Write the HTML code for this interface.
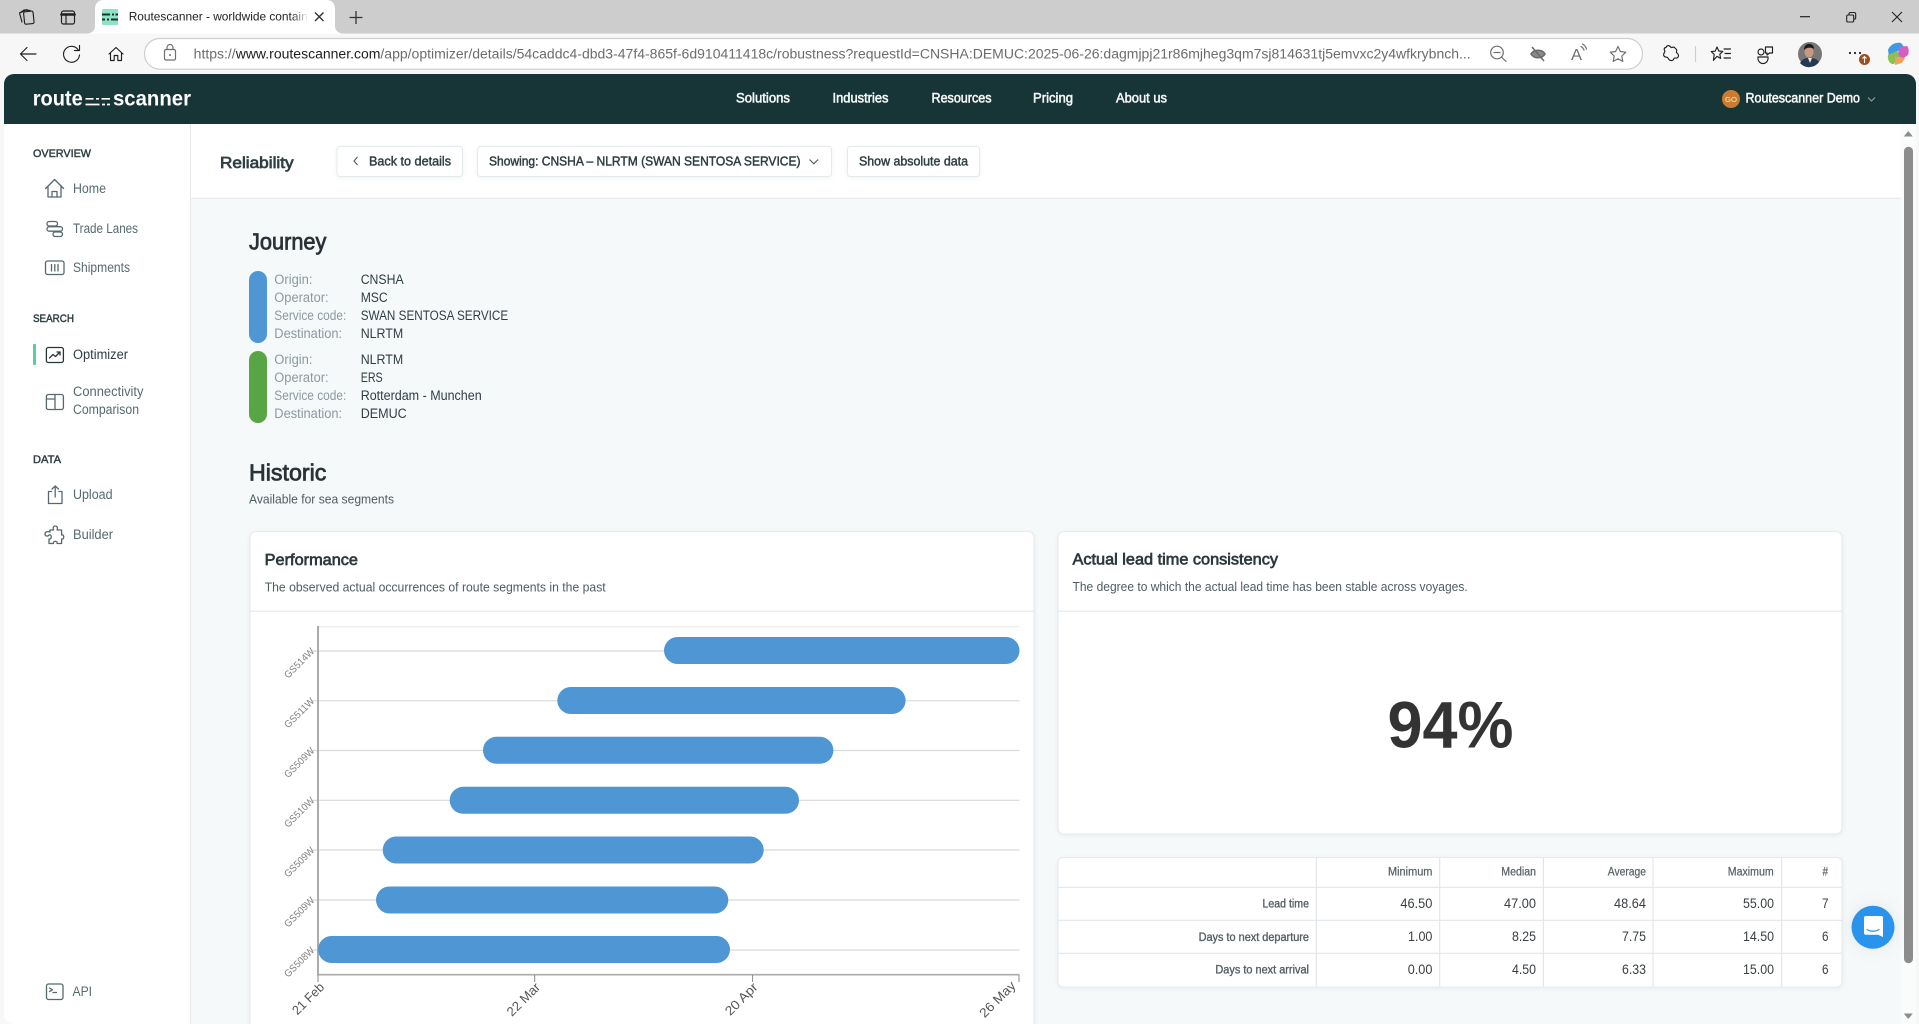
<!DOCTYPE html>
<html lang="en">
<head>
<meta charset="utf-8">
<title>Routescanner - Reliability</title>
<style>
html,body{margin:0;padding:0;width:1919px;height:1024px;overflow:hidden;background:#f7f7f7}
svg{display:block}
text{font-family:"Liberation Sans",Arial,sans-serif;white-space:pre}
.nav{font-size:13.5px;fill:#f4f7f7;stroke:#f4f7f7;stroke-width:.55}
.grp{font-size:11px;fill:#2f3f43;stroke:#2f3f43;stroke-width:.45}
.side{font-size:13.5px;fill:#566a6e}
.btn{font-size:13px;fill:#2f3e42;stroke:#2f3e42;stroke-width:.45}
.lab{font-size:13.5px;fill:#8a9a9f}
.val{font-size:13.5px;fill:#2f3e42}
.h1{font-size:23px;fill:#2a3236;stroke:#2a3236;stroke-width:.75}
.ct{font-size:15.500px;fill:#2c383c;stroke:#2c383c;stroke-width:.65}
.cs{font-size:13px;fill:#4f5d61}
.yl{font-size:10px;fill:#808080}
.xl{font-size:13px;fill:#555}
.th{font-size:11.500px;fill:#5a6468;stroke:#5a6468;stroke-width:.25}
.rl{font-size:11.500px;fill:#555f63;stroke:#555f63;stroke-width:.35}
.td{font-size:14px;fill:#3a3f42}
.ci{fill:none;stroke:#202020;stroke-width:1.15;stroke-linecap:round;stroke-linejoin:round}
.ag{fill:none;stroke:#6f6f6f;stroke-width:1.2;stroke-linecap:round;stroke-linejoin:round}
.si{fill:none;stroke:#566a6e;stroke-width:1.3;stroke-linecap:round;stroke-linejoin:round}
.box{fill:#fff;stroke:#e6eaec;stroke-width:1;filter:drop-shadow(0 1px 2px rgba(40,60,70,.07))}
.ln{stroke:#e4e7ea;stroke-width:1.2}
.gr{stroke:#d8dadb;stroke-width:1.2}
</style>
</head>
<body>
<svg width="1919" height="1024" viewBox="0 0 1919 1024" xmlns="http://www.w3.org/2000/svg">
<defs>
<linearGradient id="fade" x1="0" x2="1" y1="0" y2="0"><stop offset="0" stop-color="#fff" stop-opacity="0"/><stop offset="1" stop-color="#fff"/></linearGradient>
</defs>

<!-- browser chrome -->
<rect width="1919" height="33.5" fill="#cdcdcd"/>
<rect y="33.5" width="1919" height="40.5" fill="#f7f7f7"/>
<path d="M87 33.5C92 33.5 95 30 95 26V9C95 3.5 98 0 104 0H326C332 0 335 3.5 335 9V26C335 30 338 33.5 343 33.5Z" fill="#fff"/>
<!-- workspaces icon -->
<g class="ci"><rect x="24" y="11.5" width="9.5" height="12.5" rx="1.5" transform="rotate(-6 28 17)"/><path d="M23.5 10.5l-4 2.5 2.5 9M27 9.5l-6 3"/><path d="M24 10l6 .5"/></g>
<!-- tab actions -->
<g class="ci"><rect x="61.5" y="11" width="13" height="13" rx="2"/><path d="M61.5 14.5h13" stroke-width="2.6"/><path d="M66 14.5V24"/></g>
<!-- favicon -->
<rect x="102" y="9" width="16" height="16" rx="1" fill="#8fe3c4"/>
<path d="M102 14.5h8M112 14.5h2M115.5 14.5h2.5M102 19.5h3M107 19.5h2M111 19.5h7" stroke="#173436" stroke-width="2"/>
<text x="128.7" y="20.7" font-size="12" fill="#222" textLength="179" lengthAdjust="spacingAndGlyphs">Routescanner - worldwide contain</text>
<rect x="292" y="6" width="16" height="22" fill="url(#fade)"/>
<path d="M315 12.5l8.5 8.5M323.500 12.5L315 21" stroke="#333" stroke-width="1.4" fill="none"/>
<path d="M356 11v13M349.500 17.500h13" stroke="#333" stroke-width="1.3"/>
<!-- window controls -->
<path d="M1800 16.700h10" stroke="#222" stroke-width="1.2"/>
<g fill="none" stroke="#222" stroke-width="1.1"><rect x="1846.700" y="15" width="7" height="7" rx="1.2"/><path d="M1849 15v-1c0-1 .7-1.500 1.500-1.500h3.500c1 0 1.700.7 1.700 1.700v3.500c0 .8-.5 1.500-1.500 1.500"/></g>
<path d="M1892 12l10 10M1902 12l-10 10" stroke="#222" stroke-width="1.1"/>
<!-- nav -->
<path d="M36 54H20.500M27 47.500L20.500 54l6.500 6.500" class="ci"/>
<path d="M78.300 50a8 8 0 1 0 1.200 5M79.500 45.500V50.500H74.500" class="ci"/>
<path d="M109 54l7-6.500 7 6.500M110.500 53v7.500h3.700v-5h3.600v5h3.700V53" class="ci"/>
<rect x="144.500" y="38.500" width="1498" height="30.700" rx="15.300" fill="#fff" stroke="#cfcfcf" stroke-width="1.200"/>
<g class="ag"><rect x="164.500" y="49.500" width="11" height="10.500" rx="1.500"/><path d="M167 49.500v-2a3 3 0 0 1 6 0v2"/></g><circle cx="170" cy="55" r="1" fill="#6f6f6f"/>
<text x="193.700" y="58.500" font-size="13.500" fill="#6c6c6c" textLength="1277" lengthAdjust="spacingAndGlyphs">https://<tspan fill="#1e1e1e">www.routescanner.com</tspan>/app/optimizer/details/54caddc4-dbd3-47f4-865f-6d910411418c/robustness?requestId=CNSHA:DEMUC:2025-06-26:dagmjpj21r86mjheg3qm7sj814631tj5emvxc2y4wfkrybnch...</text>
<g class="ag"><circle cx="1497" cy="52.500" r="6.300"/><path d="M1501.500 57l4.500 4.500M1494 52.500h6"/></g>
<g fill="none" stroke="#6a6a6a" stroke-width="1.600"><path d="M1531 54c3-5 11-5 14 0c-3 5-11 5-14 0z" fill="#8a8a8a"/><path d="M1532 47l12 14" stroke-width="1.500"/></g>
<text x="1571" y="60" font-size="16" fill="#6f6f6f" textLength="11" lengthAdjust="spacingAndGlyphs">A</text>
<path d="M1581 46.500c1.500.8 2.500 2 3 3.500M1582.500 44c2 1 3.500 3 4 5" class="ag"/>
<path d="M1618 46.500l2.400 5 5.400.7-4 3.800 1 5.400-4.800-2.600-4.800 2.600 1-5.400-4-3.800 5.400-.7z" class="ag"/>
<path d="M1666 47.500c.5-1.500 2-2.500 3.500-1.500c1.500 1 1 1.500 2 1.500s2-1 3 0l2 2c1 1-.5 2 0 3s2 1 2 3-1.500 3-3 2.500c-1.500-.5-1.500.5-2 1.500s-2.500 1.500-4 .5-1-2-2-2.500-2.500 0-3.500-1.500 0-3 .7-4-.7-1.500-.5-3 1.800-1.500 1.800-1.500z" class="ci"/>
<path d="M1695.500 46v16" stroke="#cfcfcf" stroke-width="1.200"/>
<path d="M1717 47l1.800 4 4 .4-3 2.800.8 4.200-3.600-2-3.600 4 .8-6-3-2.800 4-.4zM1724 49h6.500M1725 53.500h5.500M1724 58h6.500" class="ci"/>
<path d="M1758 57h10c.5 4-2 6.500-5 6.500s-5.500-2.500-5-6.500z" class="ci"/><circle cx="1761" cy="52" r="3" class="ci"/><path d="M1765.500 47h7v6h-3l-2.500 2v-2h-1.500z" class="ci"/>
<circle cx="1810" cy="54" r="12" fill="#777"/><path d="M1800 63c3-5 6-5 10-5s7 1 9 4a12 12 0 0 1-19 1z" fill="#253a52"/><path d="M1808 58l2 5 2-5z" fill="#e8e8e8"/><ellipse cx="1809" cy="52" rx="4.500" ry="5.500" fill="#c79a80"/><path d="M1804 50c0-5 3-6 5-6s5 1 5 5c-3-2-7-2-10 1z" fill="#1f1a18"/>
<g fill="#222"><circle cx="1850" cy="53" r="1.100"/><circle cx="1855" cy="53" r="1.100"/><circle cx="1860" cy="53" r="1.100"/></g>
<circle cx="1864.500" cy="59.500" r="5.500" fill="#a04d20"/><path d="M1864.500 63v-6M1862.500 58.500l2-2 2 2" stroke="#fff" stroke-width="1.100" fill="none"/>
<g><path d="M1888 50c2-5 7-8 13-7l4 5-7 3-5 5-4 1z" fill="#3d9be3"/><path d="M1888 55l9-4 3 5-6 8c-3 1-7-3-6-9z" fill="#8cc152"/><path d="M1900 47l7-1c2 2 2 6 1 9l-7 5-3-7z" fill="#d45fc0"/><path d="M1895 57l5 0 5 1-3 5-7 2z" fill="#eba35e"/></g>

<!-- page bg -->
<rect x="4" y="124" width="1912" height="900" fill="#f6f9fa"/>
<path d="M4 124H190.500V1024H14a10 10 0 0 1-10-10z" fill="#fff"/>
<path d="M190.500 124V1024" stroke="#e7eaec" stroke-width="1.200"/>
<rect x="191" y="124" width="1710" height="74" fill="#fff"/>
<path d="M191 198.300H1901" stroke="#e7eaec" stroke-width="1.200"/>
<!-- scrollbar -->
<rect x="1901" y="124" width="15" height="900" fill="#fafbfb"/>
<rect x="1904" y="146.700" width="9" height="816.500" rx="4.500" fill="#8c8c8c"/>
<path d="M1908.300 131l4.500 5.500h-9z" fill="#8c8c8c"/>
<path d="M1903.800 1013.500h9l-4.500 5.500z" fill="#8c8c8c"/>

<!-- header -->
<path d="M4 124V84a10 10 0 0 1 10-10H1906a10 10 0 0 1 10 10V124z" fill="#173436"/>
<text x="32.700" y="105.700" font-size="21" font-weight="700" fill="#fff" textLength="50" lengthAdjust="spacingAndGlyphs">route</text>
<path d="M85.500 98.800h8M96 98.800h3M101.500 98.800h8.500M85.500 104.500h14M102 104.500h3M107 104.500h3" stroke="#fff" stroke-width="1.700"/>
<text x="113" y="105.700" font-size="21" font-weight="700" fill="#fff" textLength="78" lengthAdjust="spacingAndGlyphs">scanner</text>
<text class="nav" x="736" y="102.700" textLength="54" lengthAdjust="spacingAndGlyphs">Solutions</text>
<text class="nav" x="832.500" y="102.700" textLength="56" lengthAdjust="spacingAndGlyphs">Industries</text>
<text class="nav" x="931.500" y="102.700" textLength="60" lengthAdjust="spacingAndGlyphs">Resources</text>
<text class="nav" x="1033" y="102.700" textLength="40" lengthAdjust="spacingAndGlyphs">Pricing</text>
<text class="nav" x="1116" y="102.700" textLength="51" lengthAdjust="spacingAndGlyphs">About us</text>
<circle cx="1731" cy="99" r="9" fill="#cc7c2e"/>
<text x="1725" y="102" font-size="7.500" fill="#eec" textLength="12" lengthAdjust="spacingAndGlyphs">GO</text>
<text class="nav" x="1745.500" y="102.700" textLength="114.500" lengthAdjust="spacingAndGlyphs">Routescanner Demo</text>
<path d="M1868 97.500l3.500 3.500 3.500-3.500" fill="none" stroke="#8fa3a5" stroke-width="1.100"/>

<!-- sidebar -->
<text class="grp" x="33" y="157" textLength="58" lengthAdjust="spacingAndGlyphs">OVERVIEW</text>
<path d="M45.700 188.500L54.600 179.500L63.600 188.500M48 186V197H61V186M52 197V191.500H57V197" class="si"/>
<text class="side" x="73" y="193" textLength="33" lengthAdjust="spacingAndGlyphs">Home</text>
<g class="si"><rect x="47" y="221.500" width="10.500" height="4.500" rx="2.200"/><rect x="47" y="226.700" width="15.500" height="4.500" rx="2.200"/><rect x="53" y="232" width="9.500" height="4.500" rx="2.200"/></g>
<text class="side" x="73" y="233" textLength="65" lengthAdjust="spacingAndGlyphs">Trade Lanes</text>
<g class="si"><rect x="45.500" y="261" width="18.500" height="13.500" rx="2"/><path d="M51.500 264.500v6.500M54.800 264.500v6.500M58 264.500v6.500"/></g>
<text class="side" x="73" y="272" textLength="57" lengthAdjust="spacingAndGlyphs">Shipments</text>
<text class="grp" x="33" y="322" textLength="41" lengthAdjust="spacingAndGlyphs">SEARCH</text>
<rect x="33" y="344" width="3" height="21" rx="1" fill="#56cfa6"/>
<g fill="none" stroke="#26373b" stroke-width="1.300" stroke-linejoin="round" stroke-linecap="round"><rect x="46.400" y="347.500" width="17" height="15" rx="2"/><path d="M49.500 358l3.500-3.500 2.500 2 4.500-4.500M57 352h3v3"/></g>
<text x="73" y="359" font-size="13.500" fill="#2c3d41" textLength="55" lengthAdjust="spacingAndGlyphs">Optimizer</text>
<g class="si"><rect x="46.400" y="394.500" width="17" height="15" rx="2"/><path d="M55 394.500V409.500M46.400 399H55"/></g>
<text class="side" x="73" y="396" textLength="70.500" lengthAdjust="spacingAndGlyphs">Connectivity</text>
<text class="side" x="73" y="414" textLength="66" lengthAdjust="spacingAndGlyphs">Comparison</text>
<text class="grp" x="33" y="463" textLength="28" lengthAdjust="spacingAndGlyphs">DATA</text>
<path d="M51.500 491.500H48.500V503.500H62V491.500H59M55.200 497V486M52 489L55.200 486L58.500 489" class="si"/>
<text class="side" x="73" y="499" textLength="39.500" lengthAdjust="spacingAndGlyphs">Upload</text>
<path d="M50 530h3.500c-1-3 .5-4 1.800-4s2.700 1 1.800 4h4.500v5c3-1 2.700 5 0 4v4.500h-4.500c1-3-4.500-3-3.600 0H49v-4.500c3 1 3-5 0-4-1.500 2-4 1-4-1s2.500-3 5-2z" class="si"/>
<text class="side" x="73" y="539" textLength="40" lengthAdjust="spacingAndGlyphs">Builder</text>
<g class="si"><rect x="46.500" y="984" width="16.500" height="15.500" rx="2"/><path d="M49.500 988l3 1.800-3 1.800M53 992.500h3.500"/></g>
<text class="side" x="72.500" y="996" textLength="19.500" lengthAdjust="spacingAndGlyphs">API</text>

<!-- top bar -->
<text x="220" y="167.800" font-size="15.500" fill="#2f3e42" stroke="#2f3e42" stroke-width=".7" textLength="73.600" lengthAdjust="spacingAndGlyphs">Reliability</text>
<rect class="box" x="337" y="146.500" width="125.500" height="30" rx="3"/>
<path d="M357.500 157l-3.500 4 3.500 4" fill="none" stroke="#4a5a5e" stroke-width="1.100"/>
<text class="btn" x="369" y="165.600" textLength="82" lengthAdjust="spacingAndGlyphs">Back to details</text>
<rect class="box" x="477.500" y="146.500" width="354" height="30" rx="3"/>
<text class="btn" x="489" y="165.600" textLength="311.500" lengthAdjust="spacingAndGlyphs">Showing: CNSHA – NLRTM (SWAN SENTOSA SERVICE)</text>
<path d="M809.500 159.500l4.300 4.300 4.300-4.300" fill="none" stroke="#4a5a5e" stroke-width="1.100"/>
<rect class="box" x="847.500" y="146.500" width="132" height="30" rx="3"/>
<text class="btn" x="859" y="165.600" textLength="109" lengthAdjust="spacingAndGlyphs">Show absolute data</text>

<!-- journey -->
<text class="h1" x="249" y="249.300" textLength="77.400" lengthAdjust="spacingAndGlyphs">Journey</text>
<rect x="249" y="271" width="18" height="72" rx="9" fill="#4e96d4"/>
<rect x="249" y="351" width="18" height="72" rx="9" fill="#58a546"/>
<text class="lab" x="274.300" y="284" textLength="38.200" lengthAdjust="spacingAndGlyphs">Origin:</text>
<text class="lab" x="274.300" y="302" textLength="54.300" lengthAdjust="spacingAndGlyphs">Operator:</text>
<text class="lab" x="274.300" y="320" textLength="72" lengthAdjust="spacingAndGlyphs">Service code:</text>
<text class="lab" x="274.300" y="338" textLength="67.800" lengthAdjust="spacingAndGlyphs">Destination:</text>
<text class="val" x="360.700" y="284" textLength="43" lengthAdjust="spacingAndGlyphs">CNSHA</text>
<text class="val" x="360.700" y="302" textLength="27" lengthAdjust="spacingAndGlyphs">MSC</text>
<text class="val" x="360.700" y="320" textLength="147.500" lengthAdjust="spacingAndGlyphs">SWAN SENTOSA SERVICE</text>
<text class="val" x="360.700" y="338" textLength="42.500" lengthAdjust="spacingAndGlyphs">NLRTM</text>
<text class="lab" x="274.300" y="364" textLength="38.200" lengthAdjust="spacingAndGlyphs">Origin:</text>
<text class="lab" x="274.300" y="382" textLength="54.300" lengthAdjust="spacingAndGlyphs">Operator:</text>
<text class="lab" x="274.300" y="400" textLength="72" lengthAdjust="spacingAndGlyphs">Service code:</text>
<text class="lab" x="274.300" y="418" textLength="67.800" lengthAdjust="spacingAndGlyphs">Destination:</text>
<text class="val" x="360.700" y="364" textLength="42.500" lengthAdjust="spacingAndGlyphs">NLRTM</text>
<text class="val" x="360.700" y="382" textLength="22" lengthAdjust="spacingAndGlyphs">ERS</text>
<text class="val" x="360.700" y="400" textLength="121" lengthAdjust="spacingAndGlyphs">Rotterdam - Munchen</text>
<text class="val" x="360.700" y="418" textLength="46" lengthAdjust="spacingAndGlyphs">DEMUC</text>

<text class="h1" x="249" y="480.300" textLength="77.400" lengthAdjust="spacingAndGlyphs">Historic</text>
<text class="cs" x="249" y="503.700" textLength="145" lengthAdjust="spacingAndGlyphs">Available for sea segments</text>

<!-- performance card -->
<rect class="box" x="250" y="531.500" width="784" height="520" rx="6"/>
<text class="ct" x="264.700" y="565" textLength="93.300" lengthAdjust="spacingAndGlyphs">Performance</text>
<text class="cs" x="264.700" y="591.300" textLength="341" lengthAdjust="spacingAndGlyphs">The observed actual occurrences of route segments in the past</text>
<path d="M250 611.200H1034" class="ln"/>
<path d="M318 626.700H1019.500" stroke="#e6e6e6" stroke-width="1"/>
<g class="gr">
<path d="M311 651H1019.500"/><path d="M311 700.800H1019.500"/><path d="M311 750.500H1019.500"/><path d="M311 800.300H1019.500"/><path d="M311 850H1019.500"/><path d="M311 900H1019.500"/><path d="M311 950H1019.500"/>
</g>
<path d="M318 626V975.500" stroke="#ababab" stroke-width="2"/>
<path d="M317 974.700H1019.500" stroke="#ababab" stroke-width="1.600"/>
<path d="M318 975v7M534.700 975v7M752.600 975v7M1019 975v7" stroke="#888" stroke-width="1"/>
<g fill="#4e96d4">
<rect x="664" y="637" width="355.500" height="27" rx="13.500"/>
<rect x="557.300" y="687" width="348.300" height="27" rx="13.500"/>
<rect x="483" y="736.800" width="350.400" height="27" rx="13.500"/>
<rect x="449.700" y="786.800" width="349.300" height="27" rx="13.500"/>
<rect x="382.700" y="836.500" width="381" height="27" rx="13.500"/>
<rect x="376" y="886.500" width="352.300" height="27" rx="13.500"/>
<rect x="318" y="936" width="412" height="27" rx="13.500"/>
</g>
<g class="yl" text-anchor="end">
<text transform="translate(315 652) rotate(-45)" textLength="38" lengthAdjust="spacingAndGlyphs">GS514W</text>
<text transform="translate(315 701.800) rotate(-45)" textLength="38" lengthAdjust="spacingAndGlyphs">GS511W</text>
<text transform="translate(315 751.500) rotate(-45)" textLength="38" lengthAdjust="spacingAndGlyphs">GS509W</text>
<text transform="translate(315 801.300) rotate(-45)" textLength="38" lengthAdjust="spacingAndGlyphs">GS510W</text>
<text transform="translate(315 851) rotate(-45)" textLength="38" lengthAdjust="spacingAndGlyphs">GS509W</text>
<text transform="translate(315 901) rotate(-45)" textLength="38" lengthAdjust="spacingAndGlyphs">GS509W</text>
<text transform="translate(315 951) rotate(-45)" textLength="38" lengthAdjust="spacingAndGlyphs">GS508W</text>
</g>
<g class="xl" text-anchor="end">
<text transform="translate(325 988) rotate(-45)" textLength="39" lengthAdjust="spacingAndGlyphs">21 Feb</text>
<text transform="translate(541 988) rotate(-45)" textLength="41" lengthAdjust="spacingAndGlyphs">22 Mar</text>
<text transform="translate(758.500 988) rotate(-45)" textLength="40" lengthAdjust="spacingAndGlyphs">20 Apr</text>
<text transform="translate(1016.500 986.500) rotate(-45)" textLength="45" lengthAdjust="spacingAndGlyphs">26 May</text>
</g>

<!-- consistency card -->
<rect class="box" x="1058" y="531.500" width="784" height="302.500" rx="6"/>
<text class="ct" x="1072.500" y="564.300" textLength="205.500" lengthAdjust="spacingAndGlyphs">Actual lead time consistency</text>
<text class="cs" x="1072.500" y="591" textLength="395.200" lengthAdjust="spacingAndGlyphs">The degree to which the actual lead time has been stable across voyages.</text>
<path d="M1058 611.200H1842" class="ln"/>
<text x="1387.500" y="747.700" font-size="66" font-weight="700" fill="#333" textLength="126" lengthAdjust="spacingAndGlyphs">94%</text>

<!-- table -->
<rect class="box" x="1058" y="857.500" width="784" height="129.500" rx="5"/>
<g class="ln">
<path d="M1058 887.300H1842M1058 920.300H1842M1058 953.300H1842"/>
<path d="M1316.300 857.500V987M1439.700 857.500V987M1543.400 857.500V987M1653 857.500V987M1781.600 857.500V987"/>
</g>
<text class="th" x="1388" y="875.300" textLength="44.400" lengthAdjust="spacingAndGlyphs">Minimum</text>
<text class="th" x="1501.300" y="875.300" textLength="34.700" lengthAdjust="spacingAndGlyphs">Median</text>
<text class="th" x="1607.800" y="875.300" textLength="38.200" lengthAdjust="spacingAndGlyphs">Average</text>
<text class="th" x="1727.800" y="875.300" textLength="45.900" lengthAdjust="spacingAndGlyphs">Maximum</text>
<text class="th" x="1822.500" y="875.300" textLength="5.500" lengthAdjust="spacingAndGlyphs">#</text>
<text class="rl" x="1262.500" y="907.700" textLength="46.500" lengthAdjust="spacingAndGlyphs">Lead time</text>
<text class="rl" x="1198.600" y="941" textLength="110.400" lengthAdjust="spacingAndGlyphs">Days to next departure</text>
<text class="rl" x="1215.400" y="973.700" textLength="93.600" lengthAdjust="spacingAndGlyphs">Days to next arrival</text>
<text class="td" x="1400.400" y="908" textLength="32" lengthAdjust="spacingAndGlyphs">46.50</text>
<text class="td" x="1504" y="908" textLength="32" lengthAdjust="spacingAndGlyphs">47.00</text>
<text class="td" x="1614" y="908" textLength="32" lengthAdjust="spacingAndGlyphs">48.64</text>
<text class="td" x="1743" y="908" textLength="31" lengthAdjust="spacingAndGlyphs">55.00</text>
<text class="td" x="1822" y="908" textLength="6.500" lengthAdjust="spacingAndGlyphs">7</text>
<text class="td" x="1408" y="941" textLength="24.400" lengthAdjust="spacingAndGlyphs">1.00</text>
<text class="td" x="1512" y="941" textLength="24" lengthAdjust="spacingAndGlyphs">8.25</text>
<text class="td" x="1622" y="941" textLength="24" lengthAdjust="spacingAndGlyphs">7.75</text>
<text class="td" x="1743" y="941" textLength="31" lengthAdjust="spacingAndGlyphs">14.50</text>
<text class="td" x="1822" y="941" textLength="6.500" lengthAdjust="spacingAndGlyphs">6</text>
<text class="td" x="1407.700" y="974" textLength="24.700" lengthAdjust="spacingAndGlyphs">0.00</text>
<text class="td" x="1512" y="974" textLength="24" lengthAdjust="spacingAndGlyphs">4.50</text>
<text class="td" x="1622" y="974" textLength="24" lengthAdjust="spacingAndGlyphs">6.33</text>
<text class="td" x="1743" y="974" textLength="31" lengthAdjust="spacingAndGlyphs">15.00</text>
<text class="td" x="1822" y="974" textLength="6.500" lengthAdjust="spacingAndGlyphs">6</text>

<!-- chat -->
<circle cx="1873" cy="927.300" r="21.500" fill="#2a94ec" style="filter:drop-shadow(0 0 8px rgba(40,60,70,.10))"/>
<path d="M1866 916h15a2 2 0 0 1 2 2v19l-5-2.200h-12a2 2 0 0 1-2-2V918a2 2 0 0 1 2-2z" fill="#fff"/>
<path d="M1867 929.500c3.500 2.300 8.500 2.300 12 0" fill="none" stroke="#2a94ec" stroke-width="1.200" stroke-linecap="round"/>
</svg>
</body>
</html>
